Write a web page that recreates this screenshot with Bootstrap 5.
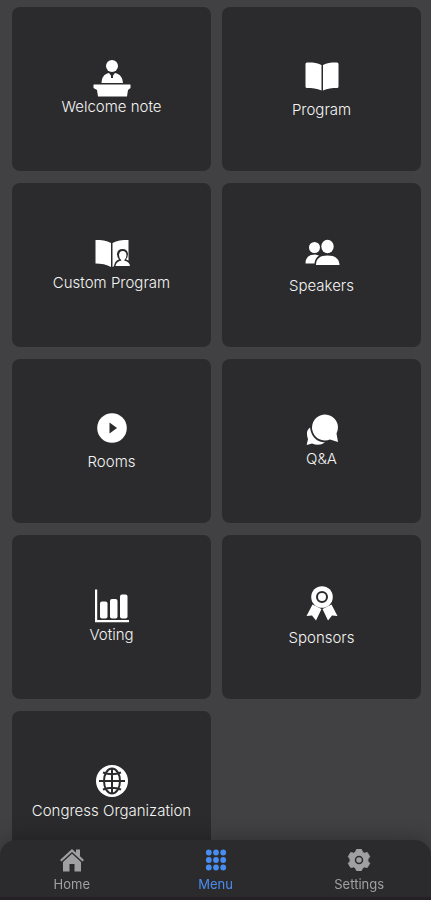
<!DOCTYPE html>
<html lang="en">
<head>
<meta charset="utf-8">
<meta name="viewport" content="width=device-width, initial-scale=1">
<title>Menu</title>
<link href="https://cdn.jsdelivr.net/npm/bootstrap@5.3.0/dist/css/bootstrap.min.css" rel="stylesheet">
<style>
body { background: #414143; font-family: Inter, "Liberation Sans", sans-serif; }
.tiles { display: grid; grid-template-columns: 1fr 1fr; gap: 12px 11px; padding: 7px 10px 24px 12px; }
.tile { height: 164px; background: #2b2b2d; border-radius: 8px; color: #f4f4f4; font-size: 15px; font-weight: 300; line-height: 20px; }
.tile:hover { color: #fff; }
.tile svg { width: 36px; height: 36px; overflow: visible; fill: #fff; }
.spaced { gap: 5px; }
.cut { fill: #2b2b2d; }
.line { fill: none; stroke: #2b2b2d; stroke-width: 2; }
.tabs { background: #2b2b2d; border-radius: 16px 16px 0 0; border-bottom: 3px solid #242023; box-shadow: 0 -2px 20px rgba(0, 0, 0, .25); padding: 8px 0 4px; }
.tab { color: #a0a0a2; font-size: 13px; line-height: 18px; gap: 3px; }
.tab svg { width: 24px; height: 24px; fill: currentColor; }
.tab.active { color: #4a8df0; }
</style>
<script src="https://cdn.jsdelivr.net/npm/bootstrap@5.3.0/dist/js/bootstrap.bundle.min.js"></script>
</head>
<body>
<main class="tiles">
  <a href="#" class="tile d-flex flex-column align-items-center justify-content-center text-decoration-none">
    <svg viewBox="0 0 36 36" aria-hidden="true"><circle cx="18" cy="5" r="6"/><path d="M7.500 22C8 16 10 13 15 12L18 16L21 12C26 13 28.500 16 29 22ZM-.5 23.500H36.500V27L34 29L33 35.500H4L3 29L-.5 27Z"/><path class="line" d="M18 13V17"/></svg>
    <span>Welcome note</span>
  </a>
  <a href="#" class="tile spaced d-flex flex-column align-items-center justify-content-center text-decoration-none">
    <svg viewBox="0 0 36 36" aria-hidden="true"><path d="M17.500 6C13 3.500 7 3.300 3 3.500Q1.500 3.600 1.500 5V27.500Q1.500 29 3 29C8 29 13 29.500 17.500 31.500ZM19 6C23.500 3.500 29 3.300 33 3.500Q34.500 3.600 34.500 5V27.500Q34.500 29 33 29C28 29 23.500 29.500 19 31.500Z"/></svg>
    <span>Program</span>
  </a>
  <a href="#" class="tile d-flex flex-column align-items-center justify-content-center text-decoration-none">
    <svg viewBox="0 0 36 36" aria-hidden="true"><path d="M17 6C13 3.500 7 3 1.500 3V26.500C7 26.500 13 27.500 17 30ZM18.500 6C23 3.500 28 3 34.500 3V28H22L18.500 30Z"/><path d="M20 30.500Q20 24 25 22.500Q23 20 23 17Q23.500 12 28.500 12T34 17Q34 20 32 22.500Q38 24 38 30.500Z" class="cut"/><path d="M21.500 29Q22 24.500 27.500 23.500Q25 21.500 25 18Q25.300 14 28.700 14T32.500 18Q32.500 21.500 30 23.500Q35.500 24.500 36 29Z"/></svg>
    <span>Custom Program</span>
  </a>
  <a href="#" class="tile spaced d-flex flex-column align-items-center justify-content-center text-decoration-none">
    <svg viewBox="0 0 36 36" aria-hidden="true"><circle cx="10.500" cy="12.500" r="5.500"/><path d="M1.500 28.500Q1.500 19.500 11 19.500L15 20.500Q11 23 10.500 28.500Z"/><ellipse cx="23.500" cy="11.500" rx="6.200" ry="6.800"/><path d="M12 30Q12 20.500 23.500 20.500T35.500 30Z"/></svg>
    <span>Speakers</span>
  </a>
  <a href="#" class="tile spaced d-flex flex-column align-items-center justify-content-center text-decoration-none">
    <svg viewBox="0 0 36 36" aria-hidden="true"><circle cx="18" cy="17" r="14.800"/><path class="cut" d="M15.500 11.500L23 17L15.500 22.500Z"/></svg>
    <span>Rooms</span>
  </a>
  <a href="#" class="tile d-flex flex-column align-items-center justify-content-center text-decoration-none">
    <svg viewBox="0 0 36 36" aria-hidden="true"><path d="M6 14.500Q2.500 17 3 21.500Q3.200 24 4 26L2.700 32L8 30.500Q15 33.500 21 29.500Q8 28.500 6 14.500Z"/><path d="M20.500 1.500A13 13 0 1 0 26 26.500L34 29L32.500 20.500A13 13 0 0 0 20.500 1.500Z"/></svg>
    <span>Q&amp;A</span>
  </a>
  <a href="#" class="tile d-flex flex-column align-items-center justify-content-center text-decoration-none">
    <svg viewBox="0 0 36 36" aria-hidden="true"><path d="M1 .5H3.200V31H35V33.300H1Z"/><rect x="6" y="12.500" width="7.500" height="17" rx="2"/><rect x="16" y="10" width="7.500" height="19.500" rx="2"/><rect x="26" y="5.500" width="7.500" height="24" rx="2"/></svg>
    <span>Voting</span>
  </a>
  <a href="#" class="tile spaced d-flex flex-column align-items-center justify-content-center text-decoration-none">
    <svg viewBox="0 0 36 36" aria-hidden="true"><path d="M8.500 17.500L2.500 29L8 28.500L12 33.500L17.500 22ZM27.500 17.500L33.500 29L28 28.500L24 33.500L18.500 22Z"/><circle cx="18" cy="10" r="10.800"/><circle class="line" cx="18" cy="10" r="5"/></svg>
    <span>Sponsors</span>
  </a>
  <a href="#" class="tile d-flex flex-column align-items-center justify-content-center text-decoration-none">
    <svg viewBox="0 0 36 36" aria-hidden="true"><circle cx="18" cy="16" r="16"/><path class="line" d="M5 16H31M18 3.500V28.500M9 7.500Q18 11 27 7.500M9 24.500Q18 21 27 24.500"/><ellipse class="line" cx="18" cy="16" rx="8" ry="12.500"/></svg>
    <span>Congress Organization</span>
  </a>
</main>
<nav class="tabs fixed-bottom" aria-label="Main">
  <div class="row g-0">
    <a href="#" class="tab col d-flex flex-column align-items-center text-decoration-none">
      <svg viewBox="0 0 24 24" aria-hidden="true"><path d="M12 1L0 12L1.500 13.500L12 4L22.500 13.500L24 12L20 8.300V1.500H16V4.700ZM12 5.800L3 14V23.500H9.500V16H14.500V23.500H21V14Z"/></svg>
      <span>Home</span>
    </a>
    <a href="#" class="tab active col d-flex flex-column align-items-center text-decoration-none" aria-current="page">
      <svg viewBox="0 0 24 24" aria-hidden="true"><circle cx="4.800" cy="4.500" r="2.900"/><circle cx="12" cy="4.500" r="2.900"/><circle cx="19.200" cy="4.500" r="2.900"/><circle cx="4.800" cy="12" r="2.900"/><circle cx="12" cy="12" r="2.900"/><circle cx="19.200" cy="12" r="2.900"/><circle cx="4.800" cy="19.500" r="2.900"/><circle cx="12" cy="19.500" r="2.900"/><circle cx="19.200" cy="19.500" r="2.900"/></svg>
      <span>Menu</span>
    </a>
    <a href="#" class="tab col d-flex flex-column align-items-center text-decoration-none">
      <svg viewBox="0 0 24 24" aria-hidden="true"><path d="M9.500 1.500H14.500L15.500 4.200L17.300 5.200L20.300 4.600L22.700 8.700L20.900 10.900V13.300L22.700 15.300L20.300 19.400L17.300 18.900L15.500 19.900L14.500 22.500H9.500L8.500 19.900L6.700 18.900L3.700 19.400L1.300 15.300L3.100 13.300V10.900L1.300 8.700L3.700 4.600L6.700 5.200L8.500 4.200Z" stroke="currentColor" stroke-linejoin="round"/><circle cx="12" cy="12" r="3.500" fill="none" stroke="#2b2b2d" stroke-width="1.500"/></svg>
      <span>Settings</span>
    </a>
  </div>
</nav>
</body>
</html>
